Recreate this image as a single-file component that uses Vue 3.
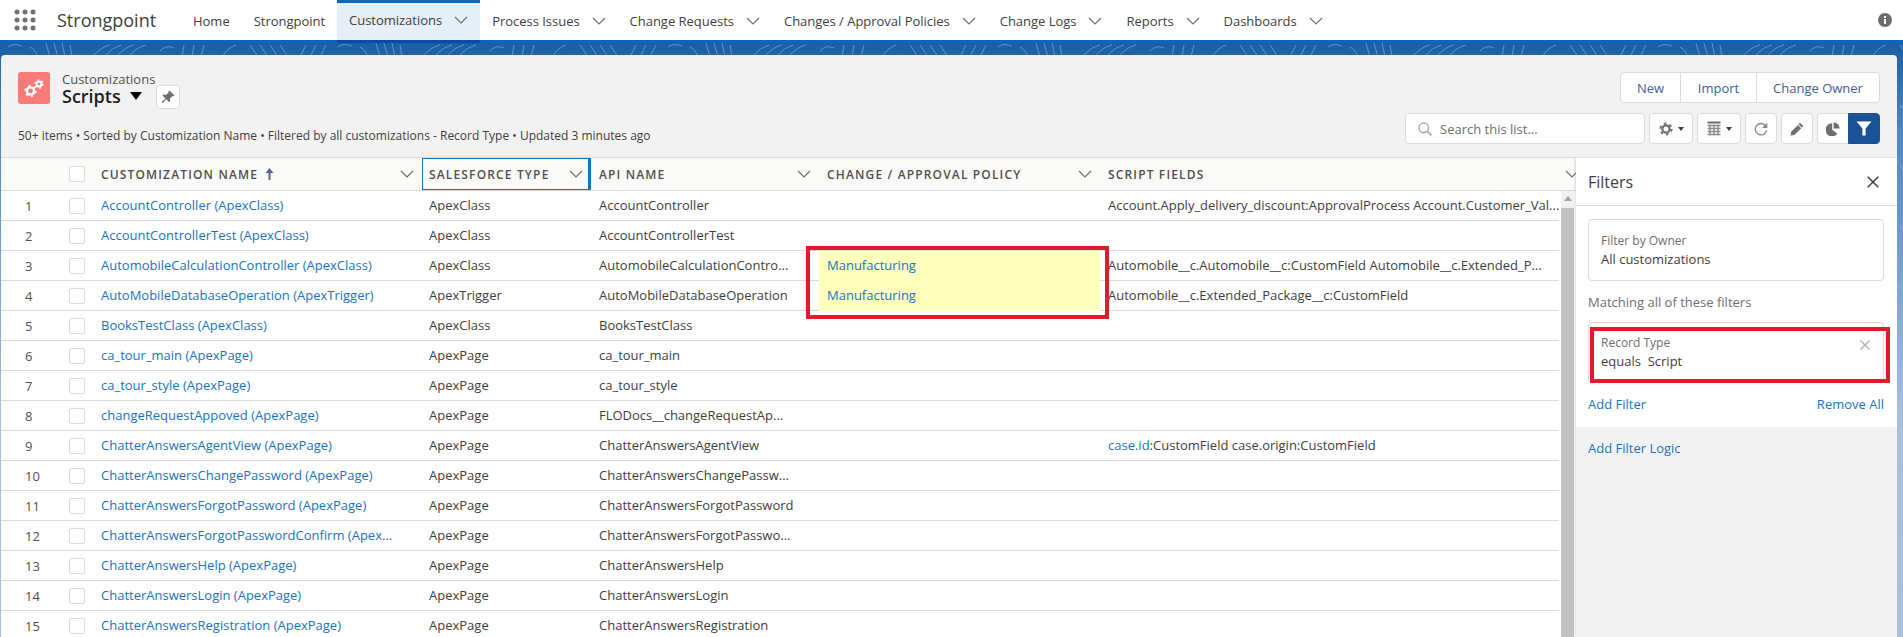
<script setup>
const tabs = [
  { name: "Home" },
  { name: "Strongpoint" },
  { name: "Customizations", menu: true, active: true },
  { name: "Process Issues", menu: true },
  { name: "Change Requests", menu: true },
  { name: "Changes / Approval Policies", menu: true },
  { name: "Change Logs", menu: true },
  { name: "Reports", menu: true },
  { name: "Dashboards", menu: true },
];

const rows = [
  { name: "AccountController (ApexClass)", type: "ApexClass", api: "AccountController", script: "Account.Apply_delivery_discount:ApprovalProcess Account.Customer_Val..." },
  { name: "AccountControllerTest (ApexClass)", type: "ApexClass", api: "AccountControllerTest" },
  { name: "AutomobileCalculationController (ApexClass)", type: "ApexClass", api: "AutomobileCalculationContro...", policy: "Manufacturing", script: "Automobile__c.Automobile__c:CustomField Automobile__c.Extended_P..." },
  { name: "AutoMobileDatabaseOperation (ApexTrigger)", type: "ApexTrigger", api: "AutoMobileDatabaseOperation", policy: "Manufacturing", script: "Automobile__c.Extended_Package__c:CustomField" },
  { name: "BooksTestClass (ApexClass)", type: "ApexClass", api: "BooksTestClass" },
  { name: "ca_tour_main (ApexPage)", type: "ApexPage", api: "ca_tour_main" },
  { name: "ca_tour_style (ApexPage)", type: "ApexPage", api: "ca_tour_style" },
  { name: "changeRequestAppoved (ApexPage)", type: "ApexPage", api: "FLODocs__changeRequestAp..." },
  { name: "ChatterAnswersAgentView (ApexPage)", type: "ApexPage", api: "ChatterAnswersAgentView", scriptLink: "case.id", script: ":CustomField case.origin:CustomField" },
  { name: "ChatterAnswersChangePassword (ApexPage)", type: "ApexPage", api: "ChatterAnswersChangePassw..." },
  { name: "ChatterAnswersForgotPassword (ApexPage)", type: "ApexPage", api: "ChatterAnswersForgotPassword" },
  { name: "ChatterAnswersForgotPasswordConfirm (Apex...", type: "ApexPage", api: "ChatterAnswersForgotPasswo..." },
  { name: "ChatterAnswersHelp (ApexPage)", type: "ApexPage", api: "ChatterAnswersHelp" },
  { name: "ChatterAnswersLogin (ApexPage)", type: "ApexPage", api: "ChatterAnswersLogin" },
  { name: "ChatterAnswersRegistration (ApexPage)", type: "ApexPage", api: "ChatterAnswersRegistration" },
];

const columns = [
  { label: "Customization Name", sorted: true },
  { label: "Salesforce Type", focused: true },
  { label: "API Name" },
  { label: "Change / Approval Policy" },
  { label: "Script Fields" },
];
</script>

<template>
  <div class="page">
    <svg class="swirls" width="1903" height="637">
      <defs>
        <pattern id="swirl" x="0" y="33" width="330" height="60" patternUnits="userSpaceOnUse">
          <g fill="none" stroke="#8dbbe4" stroke-width="1" opacity="0.6">
            <path d="M8 14c4-3 8-3 14-1M30 14c4 2 6 5 8 10M46 10l4 14M54 10l4 14M62 10l3 14M70 12l2 12" />
            <path d="M92 24c6-6 10-10 18-12M104 24c6-6 10-10 18-12M116 24c6-6 10-10 18-12M128 24c6-6 10-10 18-12" />
            <path d="M160 18c5-5 9-5 14-3M184 12l-2 12M194 12l-2 12M204 12l-3 12M222 24c4-6 8-10 14-12" />
            <path d="M250 12l8 12M260 12l8 12M270 12l8 12M280 12l8 12M300 24l6-12M310 24l6-12M320 24l6-12" />
          </g>
        </pattern>
      </defs>
      <rect x="0" y="43" width="1903" height="594" fill="url(#swirl)" />
    </svg>

    <header class="nav">
      <svg class="launcher" width="22" height="22" viewBox="0 0 22 22">
        <g fill="#706e6b">
          <circle cx="3" cy="3" r="2.5" /><circle cx="11" cy="3" r="2.5" /><circle cx="19" cy="3" r="2.5" />
          <circle cx="3" cy="11" r="2.5" /><circle cx="11" cy="11" r="2.5" /><circle cx="19" cy="11" r="2.5" />
          <circle cx="3" cy="19" r="2.5" /><circle cx="11" cy="19" r="2.5" /><circle cx="19" cy="19" r="2.5" />
        </g>
      </svg>
      <span class="app-name">Strongpoint</span>
      <nav class="tabs">
        <a v-for="tab in tabs" :key="tab.name" class="tab" :class="{ active: tab.active }">
          {{ tab.name }}
          <svg v-if="tab.menu" class="chev" width="14" height="8" viewBox="0 0 14 8">
            <path d="M1 1l6 6 6-6" fill="none" stroke="#706e6b" stroke-width="1.2" />
          </svg>
        </a>
      </nav>
      <svg class="info" width="14" height="14" viewBox="0 0 14 14">
        <circle cx="7" cy="7" r="7" fill="#706e6b" />
        <rect x="6" y="6" width="2" height="5" fill="#fff" />
        <rect x="6" y="3" width="2" height="2" fill="#fff" />
      </svg>
    </header>

    <main class="panel">
      <section class="head">
        <div class="head-left">
          <div class="title-row">
            <span class="obj-icon">
              <svg width="24" height="24" viewBox="0 0 24 24">
                <circle cx="8.5" cy="15" r="3.6" fill="none" stroke="#fff" stroke-width="2.4" />
                <circle cx="8.5" cy="15" r="5.4" fill="none" stroke="#fff" stroke-width="1.6" stroke-dasharray="2.2 3.45" />
                <circle cx="17" cy="8" r="2.5" fill="none" stroke="#fff" stroke-width="2" />
                <circle cx="17" cy="8" r="4" fill="none" stroke="#fff" stroke-width="1.4" stroke-dasharray="1.8 2.4" />
              </svg>
            </span>
            <div class="titles">
              <div class="crumb">Customizations</div>
              <div class="list-name">
                Scripts
                <span class="caret"></span>
                <button class="pin">
                  <svg width="14" height="14" viewBox="0 0 14 14">
                    <path d="M8.5 0.5l5 5-1.2 1-1-.4-2.5 2.6.4 2.6-1 1-3-3-3.7 4-1-1 3.9-3.8-3-3 1-1 2.6.5 2.6-2.5-.2-1.2z" fill="#706e6b" />
                  </svg>
                </button>
              </div>
            </div>
          </div>
          <div class="status">50+ items • Sorted by Customization Name • Filtered by all customizations - Record Type • Updated 3 minutes ago</div>
        </div>
        <div class="head-right">
          <div class="btn-group">
            <button class="act new">New</button>
            <button class="act import">Import</button>
            <button class="act owner">Change Owner</button>
          </div>
          <div class="tools">
            <label class="search">
              <svg width="14" height="14" viewBox="0 0 14 14">
                <circle cx="5.8" cy="5.8" r="4.8" fill="none" stroke="#a8a7a5" stroke-width="1.4" />
                <path d="M9.2 9.2l4.2 4.2" stroke="#a8a7a5" stroke-width="1.6" />
              </svg>
              <span>Search this list...</span>
            </label>
            <button class="tool wide">
              <svg width="14" height="14" viewBox="0 0 14 14">
                <circle cx="7" cy="7" r="3.6" fill="none" stroke="#706e6b" stroke-width="2.2" />
                <circle cx="7" cy="7" r="5.6" fill="none" stroke="#706e6b" stroke-width="2" stroke-dasharray="2.6 3.26" />
              </svg>
              <span class="mini-caret"></span>
            </button>
            <button class="tool wide">
              <svg width="14" height="15" viewBox="0 0 14 15">
                <rect x="0.5" y="0.5" width="13" height="2" fill="#706e6b" />
                <path d="M0.5 4.5h13M0.5 7.5h13M0.5 10.5h13M0.5 13.5h13M3 3.5v11M7 3.5v11M11 3.5v11" stroke="#8d8b88" stroke-width="1.4" />
              </svg>
              <span class="mini-caret"></span>
            </button>
            <button class="tool">
              <svg width="14" height="14" viewBox="0 0 14 14">
                <path d="M12.6 8.4a5.7 5.7 0 1 1-1.5-5.2L12.4 4.6" fill="none" stroke="#8d8b88" stroke-width="1.4" />
                <path d="M13.4 .6v5.4H8z" fill="#8d8b88" />
              </svg>
            </button>
            <button class="tool">
              <svg width="14" height="14" viewBox="0 0 14 14">
                <path d="M10 .8l3.2 3.2-1.4 1.4-3.2-3.2zM8 3l3.2 3.2-6.8 6.8L.6 13.4l.6-3.6z" fill="#706e6b" />
              </svg>
            </button>
            <div class="split">
              <button class="tool chart">
                <svg width="14" height="14" viewBox="0 0 14 14">
                  <path d="M6.2 1.2v6.6l5.2 4A6.6 6.6 0 1 1 6.2 1.2z" fill="#706e6b" />
                  <path d="M7.6 0.4a6.4 6.4 0 0 1 6 6.2h-6z" fill="#706e6b" />
                </svg>
              </button>
              <button class="tool filter">
                <svg width="16" height="15" viewBox="0 0 16 15">
                  <path d="M.5 .5h15L9.6 7.4V14.5H6.4V7.4z" fill="#fff" />
                </svg>
              </button>
            </div>
          </div>
        </div>
      </section>

      <section class="body">
        <div class="grid-wrap">
          <div class="hrow">
            <div class="hnum"></div>
            <div class="hcheck"><span class="box"></span></div>
            <div v-for="col in columns" :key="col.label" class="hcell" :class="{ focused: col.focused }">
              <span class="hlabel">{{ col.label }}</span>
              <svg v-if="col.sorted" class="sort" width="9" height="12" viewBox="0 0 9 12">
                <path d="M4.5 0l4 5H5.5v7h-2V5H.5z" fill="#54698d" />
              </svg>
              <svg class="hchev" width="14" height="8" viewBox="0 0 14 8">
                <path d="M1 1l6 6 6-6" fill="none" stroke="#706e6b" stroke-width="1.2" />
              </svg>
            </div>
          </div>
          <div class="rows-area">
            <div class="rows">
              <div v-for="(row, i) in rows" :key="row.name" class="row">
                <div class="num">{{ i + 1 }}</div>
                <div class="check"><span class="box"></span></div>
                <div class="cell"><a class="link">{{ row.name }}</a></div>
                <div class="cell type">{{ row.type }}</div>
                <div class="cell">{{ row.api }}</div>
                <div class="cell" :class="{ marked: row.policy }"><a class="link">{{ row.policy }}</a></div>
                <div class="cell"><a v-if="row.scriptLink" class="link">{{ row.scriptLink }}</a>{{ row.script }}</div>
              </div>
              <div class="callout"></div>
            </div>
            <div class="scrollbar">
              <div class="scroll-up"><span></span></div>
              <div class="thumb"></div>
            </div>
          </div>
        </div>

        <aside class="filters">
          <div class="filters-head">
            <span>Filters</span>
            <svg width="12" height="12" viewBox="0 0 12 12">
              <path d="M.7 .7l10.6 10.6M11.3 .7L.7 11.3" stroke="#3e3e3c" stroke-width="1.5" />
            </svg>
          </div>
          <div class="filters-main">
            <div class="fbox owner-box">
              <div class="flabel">Filter by Owner</div>
              <div class="fvalue">All customizations</div>
            </div>
            <div class="matching">Matching all of these filters</div>
            <div class="fbox record-box">
              <div class="flabel">Record Type</div>
              <div class="fvalue">equals&nbsp; Script</div>
              <svg class="fclose" width="10" height="10" viewBox="0 0 10 10">
                <path d="M.5 .5l9 9M9.5 .5l-9 9" stroke="#b0adab" stroke-width="1.3" />
              </svg>
              <div class="callout-small"></div>
            </div>
            <div class="flinks">
              <a class="link">Add Filter</a>
              <a class="link">Remove All</a>
            </div>
          </div>
          <div class="filters-foot">
            <a class="link">Add Filter Logic</a>
          </div>
        </aside>
      </section>
    </main>
  </div>
</template>

<style scoped>
.page {
  position: relative;
  width: 1903px;
  height: 637px;
  overflow: hidden;
  font-family: "Open Sans", "Noto Sans", sans-serif;
  font-size: 13px;
  color: #3e3e3c;
  background: linear-gradient(#1b5ea3 43px, #4f86bf 130px, #a9bfdf 420px);
}

.swirls {
  position: absolute;
  left: 0;
  top: 0;
}

.nav {
  position: relative;
  height: 40px;
  display: flex;
  align-items: center;
  background: #fff;
  border-bottom: 3px solid #0b67bd;
  box-sizing: content-box;
}

.launcher {
  margin-left: 14px;
  flex: none;
}

.app-name {
  margin-left: 21px;
  width: 124px;
  font-size: 18px;
  color: #3e3e3c;
}

.tabs {
  display: flex;
  align-self: stretch;
}

.tab {
  display: flex;
  align-items: center;
  padding: 2px 12px 0;
  height: 40px;
  box-sizing: border-box;
  color: #3e3e3c;
  letter-spacing: -0.02px;
  white-space: nowrap;
}

.tab.active {
  height: 43px;
  padding-top: 0;
  padding-bottom: 3px;
  background: #e6eff8;
  border-top: 3px solid #0b67bd;
  border-bottom: 3px solid #0a4da8;
}

.chev {
  margin-left: 12px;
}

.info {
  margin-left: auto;
  margin-right: 11px;
}

.panel {
  position: relative;
  margin: 12px 6px 0 1px;
  height: 582px;
  border-radius: 4px 4px 0 0;
  background: #f3f2f2;
  overflow: hidden;
}

.head {
  height: 102px;
  box-sizing: border-box;
  padding: 17px 17px 0;
  display: flex;
  justify-content: space-between;
}

.head-left {
  display: flex;
  flex-direction: column;
}

.title-row {
  display: flex;
  gap: 12px;
}

.obj-icon {
  width: 32px;
  height: 32px;
  background: #fc7a78;
  border-radius: 3px;
  display: flex;
  align-items: center;
  justify-content: center;
}

.crumb {
  font-size: 13px;
  line-height: 14px;
  color: #514f4d;
}

.list-name {
  display: flex;
  align-items: flex-start;
  font-size: 18px;
  font-weight: 600;
  line-height: 20px;
  color: #1c1c1c;
  height: 22px;
}

.caret {
  margin: 6px 0 0 9px;
  width: 0;
  height: 0;
  border-left: 6px solid transparent;
  border-right: 6px solid transparent;
  border-top: 8px solid #080707;
}

.pin {
  width: 24px;
  height: 24px;
  margin: -1px 0 0 14px;
  padding: 0;
  border: 1px solid #dddbda;
  border-radius: 4px;
  background: #fff;
  display: flex;
  align-items: center;
  justify-content: center;
}

.status {
  margin-top: 19px;
  font-size: 12px;
  line-height: 18px;
  color: #3e3e3c;
}

.head-right {
  display: flex;
  flex-direction: column;
  align-items: flex-end;
  gap: 10px;
}

.btn-group {
  display: flex;
  height: 31px;
  background: #fff;
  border: 1px solid #dddbda;
  border-radius: 4px;
  box-sizing: border-box;
}

.act {
  height: 29px;
  padding: 0;
  border: 0;
  background: none;
  font: inherit;
  color: #44608c;
  border-left: 1px solid #dddbda;
}

.act.new {
  width: 59px;
  border-left: 0;
}

.act.import {
  width: 76px;
}

.act.owner {
  width: 123px;
}

.tools {
  display: flex;
  gap: 4px;
}

.search {
  width: 240px;
  height: 31px;
  box-sizing: border-box;
  display: flex;
  align-items: center;
  gap: 8px;
  padding-left: 12px;
  background: #fff;
  border: 1px solid #dddbda;
  border-radius: 4px;
  color: #706e6b;
}

.tool {
  width: 32px;
  height: 31px;
  padding: 0;
  background: #fff;
  border: 1px solid #dddbda;
  border-radius: 4px;
  display: flex;
  align-items: center;
  justify-content: center;
}

.tool.wide {
  width: 44px;
  gap: 5px;
}

.mini-caret {
  width: 0;
  height: 0;
  border-left: 3.5px solid transparent;
  border-right: 3.5px solid transparent;
  border-top: 4px solid #3e3e3c;
}

.split {
  display: flex;
}

.tool.chart {
  border-radius: 4px 0 0 4px;
  border-right: 0;
  width: 31px;
}

.tool.filter {
  background: #1b5297;
  border-color: #1b5297;
  border-radius: 0 4px 4px 0;
}

.body {
  display: flex;
  height: 480px;
}

.grid-wrap {
  width: 1575px;
  background: #fff;
  border-top: 1px solid #dddbda;
  box-sizing: border-box;
}

.hrow {
  display: grid;
  grid-template-columns: 68px 24px 329px 169px 228px 281px 476px;
  height: 33px;
  overflow: hidden;
  background: #fafaf9;
  border-bottom: 1px solid #dddbda;
  box-sizing: border-box;
}

.hcheck,
.check {
  display: flex;
  align-items: center;
}

.box {
  width: 16px;
  height: 16px;
  box-sizing: border-box;
  border: 1px solid #dddbda;
  border-radius: 2px;
  background: #fff;
}

.hcell {
  position: relative;
  display: flex;
  align-items: center;
  gap: 7px;
  padding-left: 8px;
  box-sizing: border-box;
}

.hlabel {
  font-size: 12px;
  font-weight: 600;
  letter-spacing: 1.15px;
  text-transform: uppercase;
  color: #514f4d;
  white-space: nowrap;
}

.hchev {
  position: absolute;
  right: 8px;
  top: 12px;
}

.hcell:last-child .hchev {
  right: -3px;
}

.hcell.focused {
  padding-left: 6px;
  border: 1px solid #1672c4;
  border-right: 3px solid #1672c4;
}

.hcell.focused .hchev {
  right: 5px;
  top: 11px;
}

.rows-area {
  display: flex;
  height: 447px;
}

.rows {
  position: relative;
  width: 1558px;
}

.row {
  display: grid;
  grid-template-columns: 68px 24px 329px 169px 228px 281px 459px;
  height: 30px;
  border-bottom: 1px solid #dddbda;
  box-sizing: border-box;
}

.num {
  padding-left: 24px;
  line-height: 30px;
  color: #514f4d;
}

.cell {
  padding-left: 8px;
  line-height: 29px;
  white-space: nowrap;
  overflow: hidden;
}

.cell.type {
  padding-left: 7px;
}

.cell.marked {
  background: #ffffbe;
}

.link {
  color: #1a73c0;
  text-decoration: none;
}

.callout {
  position: absolute;
  left: 805px;
  top: 55px;
  width: 303px;
  height: 73px;
  box-sizing: border-box;
  border: 4px solid #e21b2b;
}

.scrollbar {
  margin-left: 2px;
  width: 13px;
  background: #f1f1f1;
  display: flex;
  flex-direction: column;
}

.scroll-up {
  height: 17px;
  display: flex;
  justify-content: center;
  padding-top: 5px;
  box-sizing: border-box;
}

.scroll-up span {
  width: 0;
  height: 0;
  border-left: 4px solid transparent;
  border-right: 4px solid transparent;
  border-bottom: 5px solid #a3a3a3;
}

.thumb {
  flex: 1;
  background: #c1c1c1;
}

.filters {
  width: 321px;
  display: flex;
  flex-direction: column;
  background: #fff;
  margin-top: 1px;
  box-shadow: -1px 0 2px rgba(0, 0, 0, 0.15);
}

.filters-head {
  height: 48px;
  box-sizing: border-box;
  padding: 0 18px 0 12px;
  display: flex;
  align-items: center;
  justify-content: space-between;
  border-bottom: 1px solid #dddbda;
  font-size: 16px;
  color: #3e3e3c;
}

.filters-main {
  height: 221px;
  box-sizing: border-box;
  padding: 13px 12px 0;
}

.fbox {
  position: relative;
  box-sizing: border-box;
  width: 296px;
  border: 1px solid #dddbda;
  border-radius: 4px;
  padding-left: 12px;
}

.owner-box {
  height: 62px;
  padding-top: 12px;
}

.record-box {
  height: 61px;
  padding-top: 11px;
}

.flabel {
  font-size: 12px;
  line-height: 18px;
  color: #706e6b;
}

.fvalue {
  line-height: 19px;
  color: #3e3e3c;
}

.matching {
  margin: 12px 0 10px;
  line-height: 19px;
  color: #706e6b;
}

.fclose {
  position: absolute;
  right: 13px;
  top: 17px;
}

.callout-small {
  position: absolute;
  left: 1px;
  top: 4px;
  width: 300px;
  height: 56px;
  box-sizing: border-box;
  border: 4px solid #e21b2b;
}

.flinks {
  display: flex;
  justify-content: space-between;
  width: 296px;
  margin-top: 12px;
  line-height: 19px;
}

.filters-foot {
  flex: 1;
  padding: 12px;
  line-height: 19px;
  background: #f3f2f2;
}
</style>
